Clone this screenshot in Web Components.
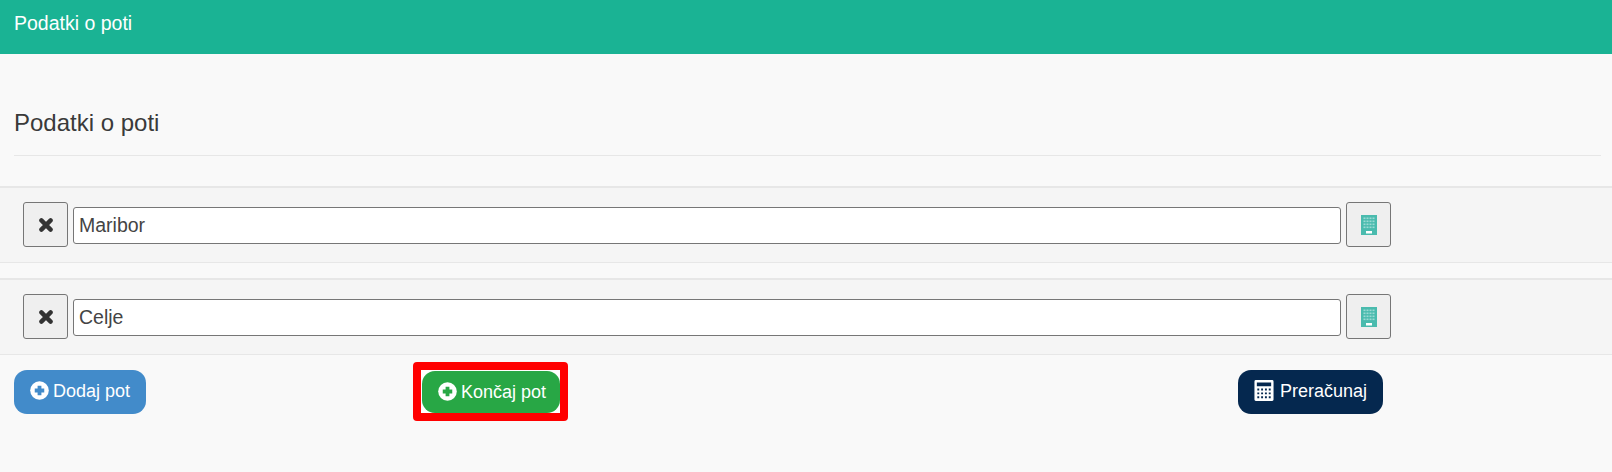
<!DOCTYPE html>
<html lang="sl">
<head>
<meta charset="utf-8">
<title>Podatki o poti</title>
<style>
  html, body { margin: 0; padding: 0; }
  body { background: #f9f9f9; font-family: "Liberation Sans", Arial, sans-serif; color: #333; }
</style>
</head>
<body>
<pot-app></pot-app>

<script>
// Ikone
const IKONE = {
  plus: `<svg viewBox="0 0 20 20" width="19" height="19"><circle cx="10" cy="10" r="9.800" fill="#fff"/><path d="M8 5h4v3h3v4h-3v3H8v-3H5V8h3z" fill="var(--ikona-barva)"/></svg>`,
  calc: `<svg viewBox="0 0 20 22" width="20" height="21"><path fill="#fff" fill-rule="evenodd" d="M1.500 0h17A1.500 1.500 0 0 1 20 1.500v19a1.500 1.500 0 0 1-1.500 1.500h-17A1.500 1.500 0 0 1 0 20.500v-19A1.500 1.500 0 0 1 1.500 0zM2.500 2.500v4h15v-4zM3 9v2h2V9zm4 0v2h2V9zm4 0v2h2V9zm4 0v2h2V9zM3 13v2h2v-2zm4 0v2h2v-2zm4 0v2h2v-2zm4 0v2h2v-2zM3 17v2h2v-2zm4 0v2h2v-2zm4 0v2h2v-2zm4 0v2h2v-2z"/></svg>`,
  times: `<svg viewBox="0 0 14 14" width="14" height="14"><path d="M2.400 2.400l9.200 9.200M11.600 2.400l-9.200 9.200" fill="none" stroke="#333" stroke-width="4.400" stroke-linecap="round"/></svg>`,
  stavba: `<svg viewBox="0 0 16 20" width="16" height="20"><rect width="16" height="20" fill="#4abbae"/><g fill="#9bdad3">
    ${[2.5, 5.5, 8.5, 11.5].map(y => [2.5, 5.5, 8.5, 11.5].map(x => `<rect x="${x}" y="${y}" width="2" height="1.600"/>`).join('')).join('')}
    </g><rect x="5" y="16" width="6" height="2.500" fill="#fff"/></svg>`
};

class PotHeader extends HTMLElement {
  constructor() {
    super();
    this.attachShadow({ mode: 'open' }).innerHTML = `
      <style>
        :host { display: block; height: 54px; background: #1ab394; color: #fff; box-sizing: border-box; padding: 13px 14px 0; font-size: 19.500px; line-height: 20px; }
      </style>
      <slot></slot>`;
  }
}

class PotNaslov extends HTMLElement {
  constructor() {
    super();
    this.attachShadow({ mode: 'open' }).innerHTML = `
      <style>
        :host { display: block; padding: 55px 11px 0 14px; }
        h3 { margin: 0; padding-bottom: 18px; font-size: 24px; font-weight: 400; line-height: 28px; color: #3a3a3a; border-bottom: 1px solid #e7e7e7; }
      </style>
      <h3><slot></slot></h3>`;
  }
}

class PotVrstica extends HTMLElement {
  constructor() {
    super();
    const vrednost = this.getAttribute('vrednost') || '';
    this.attachShadow({ mode: 'open' }).innerHTML = `
      <style>
        :host { display: flex; align-items: center; gap: 5px; height: 77px; box-sizing: border-box; padding: 0 221px 1px 23px; background: #f5f5f5; border-top: 2px solid #e7e7e7; border-bottom: 1px solid #e7e7e7; }
        button { flex: none; width: 45px; height: 45px; display: flex; align-items: center; justify-content: center; padding: 0; background: #efefef; border: 1px solid #767676; border-radius: 3px; }
        input { flex: 1; min-width: 0; height: 37px; margin-top: 2px; box-sizing: border-box; padding: 0 5px; font: 19.500px "Liberation Sans", Arial, sans-serif; color: #444; background: #fff; border: 1px solid #767676; border-radius: 3px; outline: none; }
      </style>
      <button type="button">${IKONE.times}</button>
      <input type="text" value="${vrednost}">
      <button type="button">${IKONE.stavba}</button>`;
  }
}

class PotGumb extends HTMLElement {
  constructor() {
    super();
    const ikona = this.getAttribute('ikona') || 'plus';
    this.attachShadow({ mode: 'open' }).innerHTML = `
      <style>
        :host { display: inline-block; --ozadje: #428bca; --razmik: 4px; --desno: 16px; }
        :host([vrsta="zelen"]) { --ozadje: #28a745; --desno: 14px; }
        :host([vrsta="temen"]) { --ozadje: #05284f; --razmik: 6px; }
        button { display: flex; align-items: center; gap: var(--razmik); height: var(--visina, 44px); padding: 0 var(--desno) 0 16px; margin: 0; --ikona-barva: var(--ozadje); background: var(--ozadje); color: #fff; border: 0; border-radius: 13px; font: 18px "Liberation Sans", Arial, sans-serif; white-space: nowrap; }
        svg { display: block; margin-top: -2px; }
        /* rdeci okvir oznake */
        :host([oznacen]) { --visina: 42px; background: #fff; border: 8px solid #f00; border-radius: 4px; padding: 1px 0 0 1px; }
      </style>
      <button type="button">${IKONE[ikona]}<span><slot></slot></span></button>`;
  }
}

class PotOrodja extends HTMLElement {
  constructor() {
    super();
    this.attachShadow({ mode: 'open' }).innerHTML = `
      <style>
        :host { display: grid; grid-template-columns: 399px 825px auto; align-items: center; padding: 7px 14px 0; }
        ::slotted(*) { justify-self: start; }
      </style>
      <slot></slot>`;
  }
}

class PotApp extends HTMLElement {
  constructor() {
    super();
    this.attachShadow({ mode: 'open' }).innerHTML = `
      <style>
        :host { display: block; }
        .vrstice { display: flex; flex-direction: column; gap: 15px; margin-top: 30px; }
      </style>
      <pot-header>Podatki o poti</pot-header>
      <pot-naslov>Podatki o poti</pot-naslov>
      <div class="vrstice">
        <pot-vrstica vrednost="Maribor"></pot-vrstica>
        <pot-vrstica vrednost="Celje"></pot-vrstica>
      </div>
      <pot-orodja>
        <pot-gumb>Dodaj pot</pot-gumb>
        <pot-gumb vrsta="zelen" oznacen>Končaj pot</pot-gumb>
        <pot-gumb vrsta="temen" ikona="calc">Preračunaj</pot-gumb>
      </pot-orodja>`;
  }
}

customElements.define('pot-header', PotHeader);
customElements.define('pot-naslov', PotNaslov);
customElements.define('pot-vrstica', PotVrstica);
customElements.define('pot-gumb', PotGumb);
customElements.define('pot-orodja', PotOrodja);
customElements.define('pot-app', PotApp);
</script>
</body>
</html>
